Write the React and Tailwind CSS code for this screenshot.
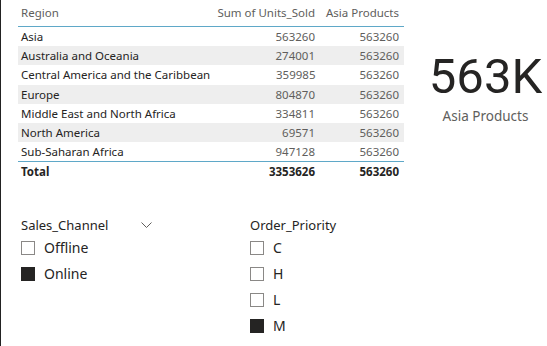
const rows = [
  { region: 'Asia', units: '563260', asia: '563260' },
  { region: 'Australia and Oceania', units: '274001', asia: '563260' },
  { region: 'Central America and the Caribbean', units: '359985', asia: '563260' },
  { region: 'Europe', units: '804870', asia: '563260' },
  { region: 'Middle East and North Africa', units: '334811', asia: '563260' },
  { region: 'North America', units: '69571', asia: '563260' },
  { region: 'Sub-Saharan Africa', units: '947128', asia: '563260' },
];

function Check({ on, label }) {
  return (
    <div className="flex items-center h-[26px]">
      <div className={`w-[14px] h-[14px] ${on ? 'bg-[#252423]' : 'border border-[#8a8886] bg-white'}`} />
      <span className="ml-[9px] text-[14px] text-[#252423] leading-none">{label}</span>
    </div>
  );
}

export default function App() {
  return (
    <div className="w-[547px] h-[346px] bg-white border-l border-[#222] overflow-hidden font-['Noto_Sans',sans-serif]">
      <div className="flex">
        {/* table */}
        <div className="ml-[17px] w-[386px] text-[11.5px] text-[#252423]">
          <div className="flex items-center h-[27px] border-b border-[#5fa8c8] text-[#605e5c] whitespace-nowrap">
            <div className="flex-1 pl-[3px]">Region</div>
            <div className="w-[110px] text-right pr-[4px]">Sum of Units_Sold</div>
            <div className="w-[85px] text-right pr-[5px]">Asia Products</div>
          </div>
          {rows.map((r, i) => (
            <div key={r.region} className={`flex items-center h-[19.2px] whitespace-nowrap ${i % 2 === 1 ? 'bg-[#eeeeee]' : ''}`}>
              <div className="flex-1 pl-[3px]">{r.region}</div>
              <div className="w-[110px] text-right pr-[4px] text-[#605e5c]">{r.units}</div>
              <div className="w-[85px] text-right pr-[5px] text-[#605e5c]">{r.asia}</div>
            </div>
          ))}
          <div className="border-t border-[#5fa8c8] flex items-center h-[19px] font-bold">
            <div className="flex-1 pl-[3px]">Total</div>
            <div className="w-[110px] text-right pr-[4px]">3353626</div>
            <div className="w-[85px] text-right pr-[5px]">563260</div>
          </div>
        </div>
        {/* card */}
        <div className="flex-1 flex flex-col items-center pt-[52px] pl-[20px]">
          <div className="text-[49px] leading-none text-[#252423] font-['Roboto',sans-serif]">563K</div>
          <div className="mt-[5px] text-[13.5px] text-[#605e5c]">Asia Products</div>
        </div>
      </div>

      {/* slicers */}
      <div className="flex mt-[35px] pl-[20px]">
        <div className="w-[229px]">
          <div className="flex items-center w-[131px] justify-between h-[20px]">
            <span className="text-[13px] text-[#252423]">Sales_Channel</span>
            <svg width="11" height="7" viewBox="0 0 11 7" fill="none" stroke="#605e5c" strokeWidth="1">
              <path d="M0.5 0.5 L5.5 5.5 L10.5 0.5" />
            </svg>
          </div>
          <Check on={false} label="Offline" />
          <Check on={true} label="Online" />
        </div>
        <div>
          <div className="flex items-center h-[20px]">
            <span className="text-[13px] text-[#252423]">Order_Priority</span>
          </div>
          <Check on={false} label="C" />
          <Check on={false} label="H" />
          <Check on={false} label="L" />
          <Check on={true} label="M" />
        </div>
      </div>
    </div>
  );
}
